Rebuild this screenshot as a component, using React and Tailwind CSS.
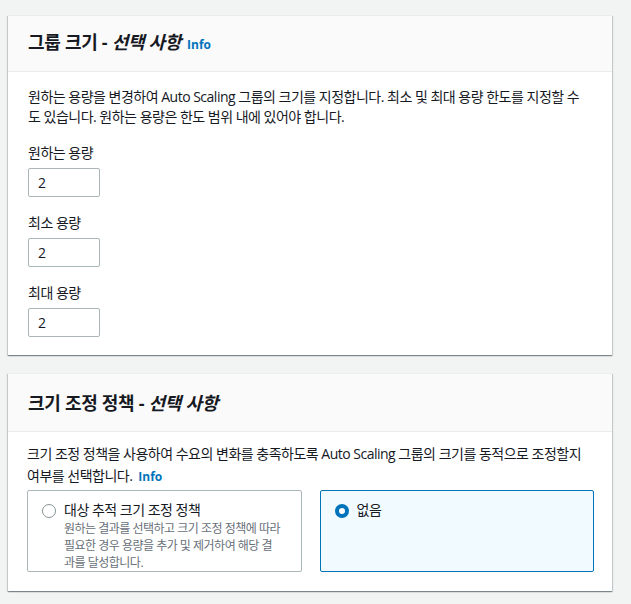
import React from 'react';

const FONT = { fontFamily: '"Open Sans", "Noto Sans CJK KR", sans-serif' };

function Info() {
  return <span className="ml-[6px] text-[12px] font-bold text-[#0073bb] not-italic tracking-normal">Info</span>;
}

function NumberField({ label, value }) {
  return (
    <div className="flex flex-col">
      <label className="text-[14px] leading-[20px] text-[#16191f]">{label}</label>
      <div className="mt-[5px] w-[72px] h-[29px] border border-[#aab7b8] rounded-[2px] bg-white flex items-center pl-[9px] text-[14px] text-[#16191f]">
        {value}
      </div>
    </div>
  );
}

function Card({ title, info, headerClass, children }) {
  return (
    <div className="bg-white border-t border-[#eaeded] shadow-[0_1px_1px_0_rgba(0,28,36,0.3),1px_1px_1px_0_rgba(0,28,36,0.15),-1px_1px_1px_0_rgba(0,28,36,0.15)]">
      <div className={`bg-[#fafafa] border-b border-[#eaeded] px-[20px] flex items-center ${headerClass}`}>
        <h2 className="text-[18px] font-bold text-[#16191f] leading-[24px] tracking-[-0.3px]">
          {title.plain}
          <i className="font-bold">{title.italic}</i>
          {info && <Info />}
        </h2>
      </div>
      {children}
    </div>
  );
}

function Tile({ selected, title, description }) {
  return (
    <div
      className={`h-[82px] border rounded-[2px] px-[14px] pt-[9px] flex gap-[8px] ${
        selected ? 'border-[#0073bb] bg-[#f1faff]' : 'border-[#aab7b8] bg-white'
      }`}
    >
      {selected ? (
        <div className="mt-[4px] w-[14px] h-[14px] rounded-full border-[4px] border-[#0073bb] bg-white shrink-0" />
      ) : (
        <div className="mt-[4px] w-[14px] h-[14px] rounded-full border border-[#879596] bg-white shrink-0" />
      )}
      <div className="flex flex-col">
        <div className="text-[14px] leading-[20px] text-[#16191f]">{title}</div>
        {description && (
          <div className="text-[12px] leading-[17px] text-[#687078]">{description}</div>
        )}
      </div>
    </div>
  );
}

export default function App() {
  return (
    <div className="w-[631px] h-[604px] bg-[#f2f3f3] pt-[15px] pl-[8px] pr-[19px] tracking-[-0.5px]" style={FONT}>
      <Card title={{ plain: '그룹 크기 - ', italic: '선택 사항' }} info headerClass="h-[56px]">
        <div className="px-[20px] pt-[15px] pb-[18px]">
          <p className="text-[14px] leading-[20px] text-[#16191f]">
            원하는 용량을 변경하여 Auto Scaling 그룹의 크기를 지정합니다. 최소 및 최대 용량 한도를 지정할 수<br />
            도 있습니다. 원하는 용량은 한도 범위 내에 있어야 합니다.
          </p>
          <div className="mt-[16px] flex flex-col gap-[16px]">
            <NumberField label="원하는 용량" value="2" />
            <NumberField label="최소 용량" value="2" />
            <NumberField label="최대 용량" value="2" />
          </div>
        </div>
      </Card>

      <div className="mt-[18px]">
        <Card title={{ plain: '크기 조정 정책 - ', italic: '선택 사항' }} headerClass="h-[58px]">
          <div className="pl-[19px] pr-[18px] pt-[11px] pb-[19px]">
            <p className="text-[14px] leading-[22px] text-[#16191f]">
              크기 조정 정책을 사용하여 수요의 변화를 충족하도록 Auto Scaling 그룹의 크기를 동적으로 조정할지<br />
              여부를 선택합니다.
              <Info />
            </p>
            <div className="mt-[2px] grid grid-cols-2 gap-[18px]">
              <Tile
                title="대상 추적 크기 조정 정책"
                description={<>원하는 결과를 선택하고 크기 조정 정책에 따라<br />필요한 경우 용량을 추가 및 제거하여 해당 결<br />과를 달성합니다.</>}
              />
              <Tile selected title="없음" />
            </div>
          </div>
        </Card>
      </div>
    </div>
  );
}
